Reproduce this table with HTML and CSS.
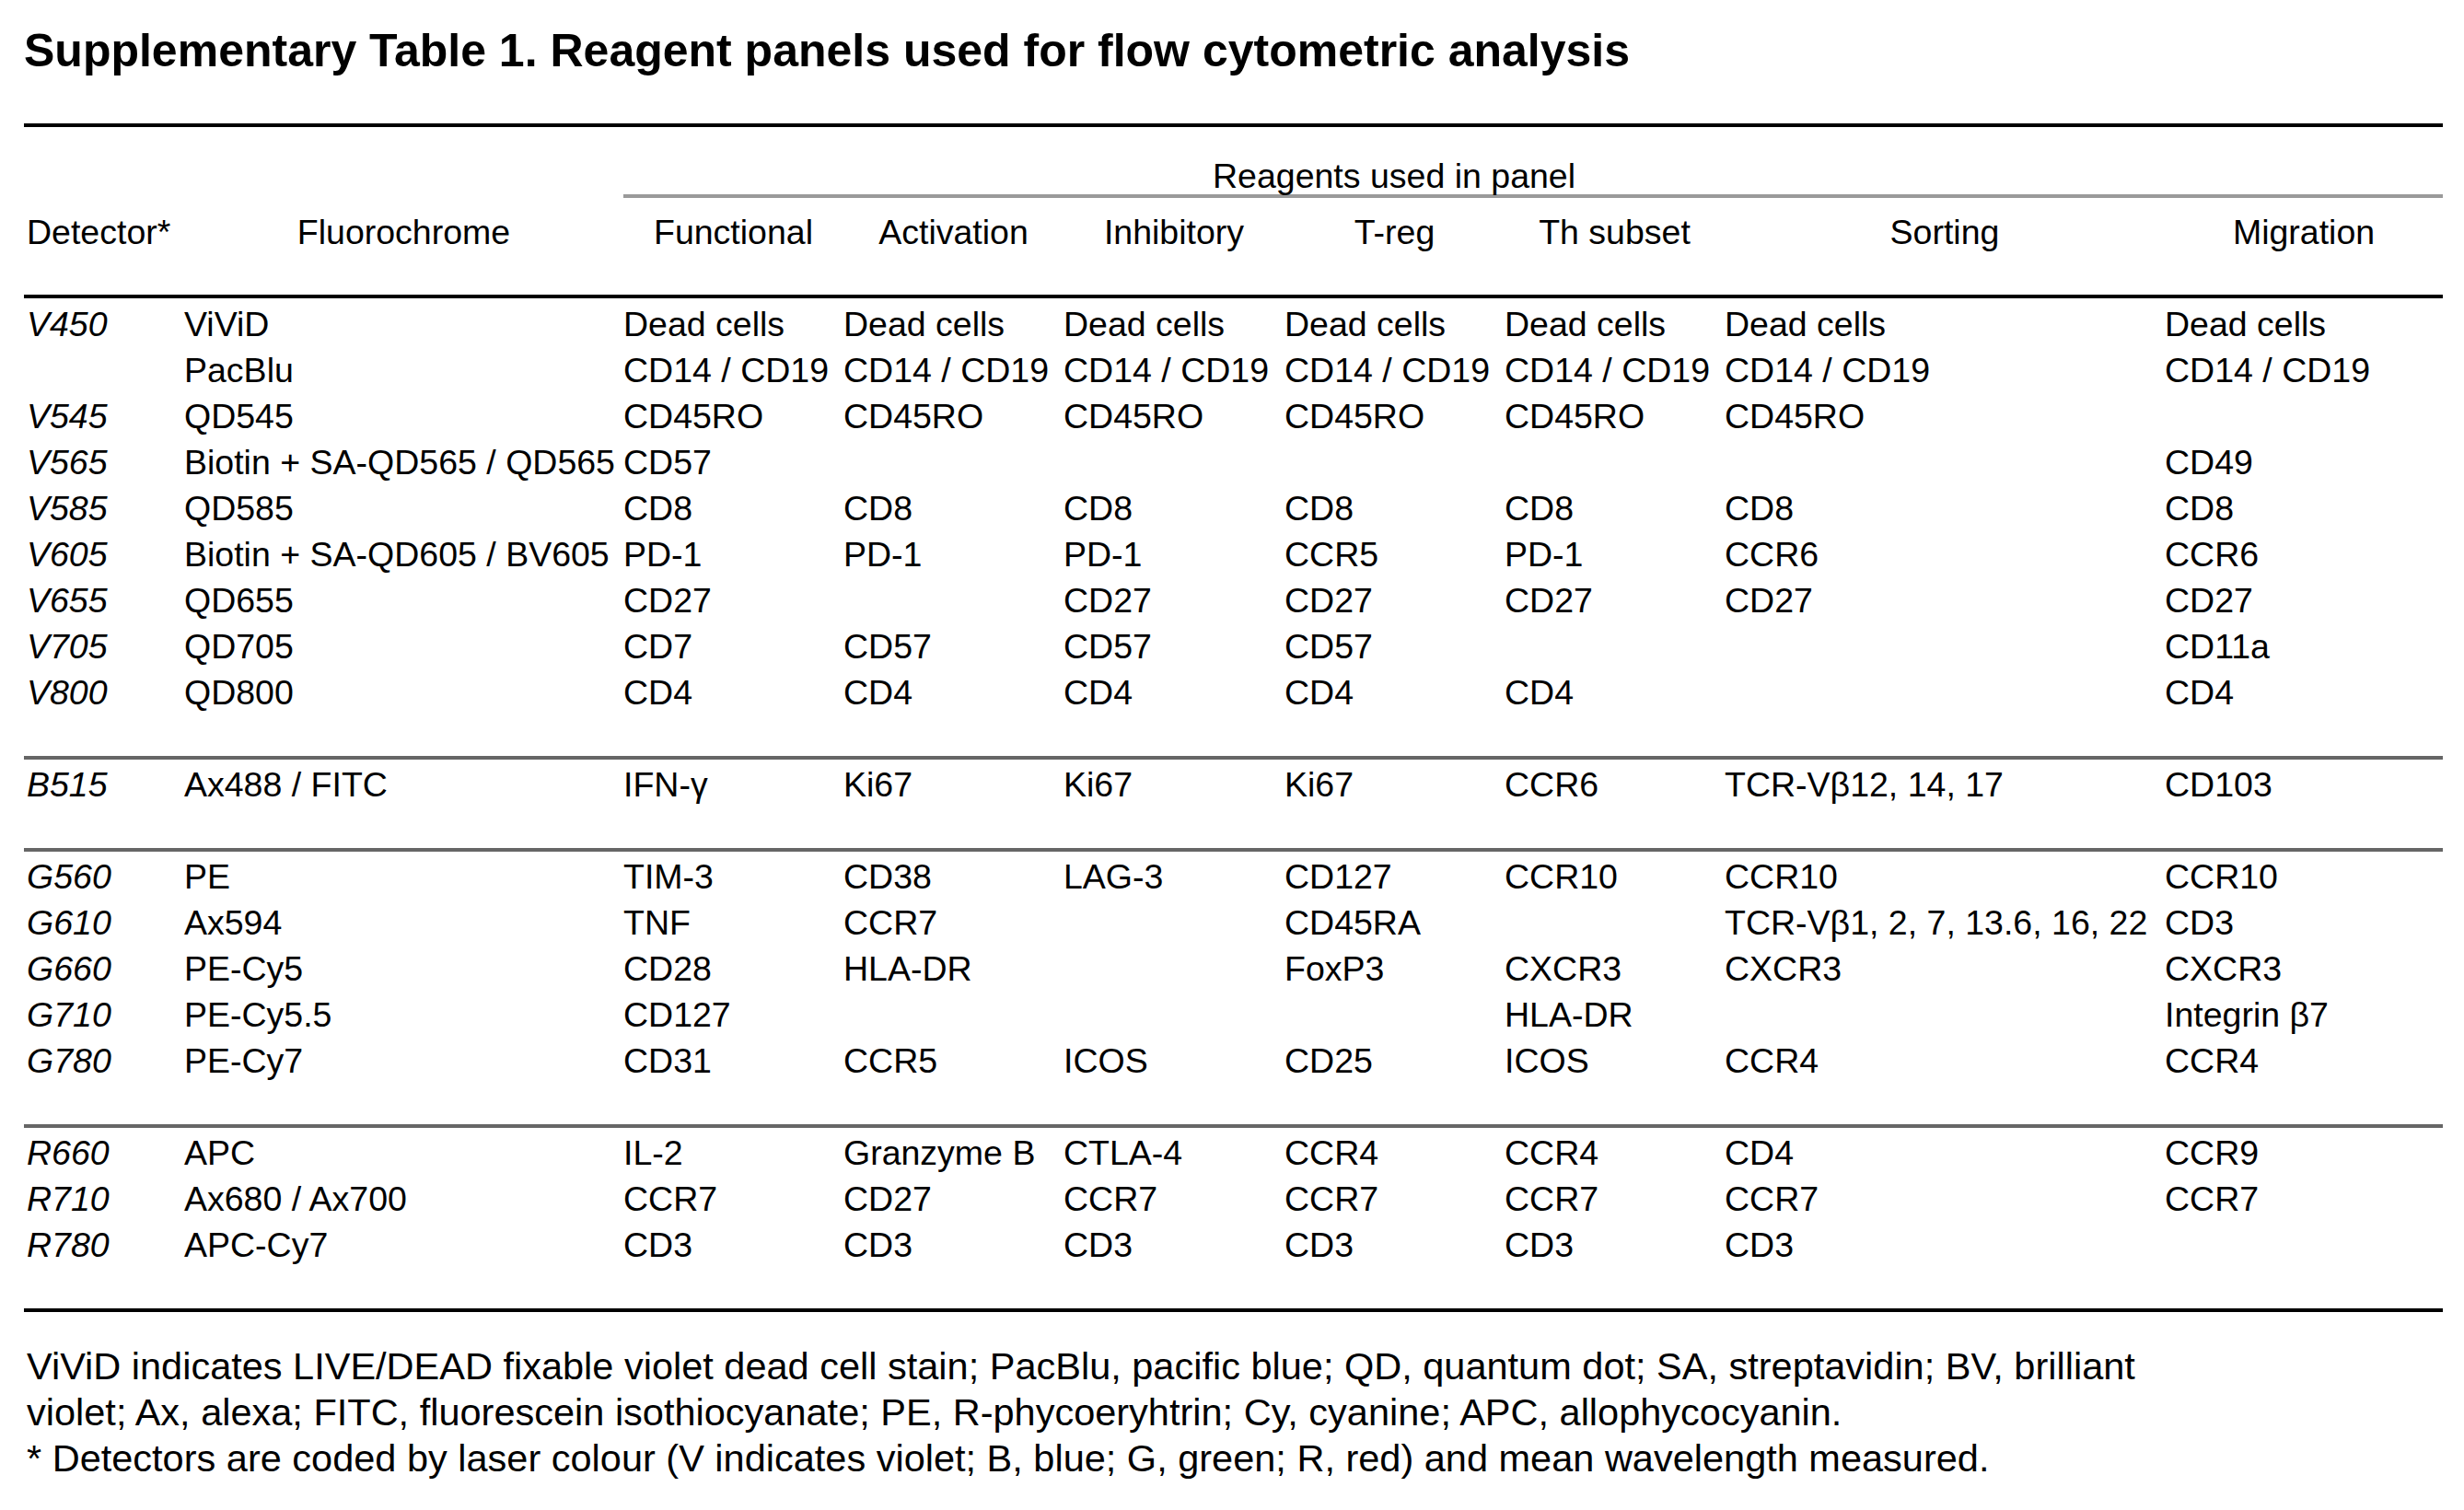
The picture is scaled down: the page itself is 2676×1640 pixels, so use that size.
FILE: index.html
```html
<!DOCTYPE html>
<html lang="en">
<head>
<meta charset="utf-8">
<title>Supplementary Table 1</title>
<link rel="stylesheet" href="styles.css">
</head>
<body>
<main class="page">
  <h1 class="title">Supplementary Table 1. Reagent panels used for flow cytometric analysis</h1>
  <table class="panel-table">
    <colgroup>
      <col class="c-det"><col class="c-fluo"><col class="c-std"><col class="c-std"><col class="c-inh"><col class="c-std"><col class="c-std"><col class="c-sort"><col class="c-mig">
    </colgroup>
    <thead>
      <tr class="head-top">
        <th rowspan="2" class="h-det">Detector*</th>
        <th rowspan="2" class="h-fluo">Fluorochrome</th>
        <th colspan="6" class="h-span">Reagents used in panel</th>
        <th class="h-span"></th>
      </tr>
      <tr class="head-cols">
        <th>Functional</th><th>Activation</th><th>Inhibitory</th><th>T-reg</th><th>Th subset</th><th>Sorting</th><th>Migration</th>
      </tr>
    </thead>
    <tbody class="group">
      <tr><td class="det">V450</td><td>ViViD</td><td>Dead cells</td><td>Dead cells</td><td>Dead cells</td><td>Dead cells</td><td>Dead cells</td><td>Dead cells</td><td>Dead cells</td></tr>
      <tr><td class="det"></td><td>PacBlu</td><td>CD14 / CD19</td><td>CD14 / CD19</td><td>CD14 / CD19</td><td>CD14 / CD19</td><td>CD14 / CD19</td><td>CD14 / CD19</td><td>CD14 / CD19</td></tr>
      <tr><td class="det">V545</td><td>QD545</td><td>CD45RO</td><td>CD45RO</td><td>CD45RO</td><td>CD45RO</td><td>CD45RO</td><td>CD45RO</td><td></td></tr>
      <tr><td class="det">V565</td><td>Biotin + SA-QD565 / QD565</td><td>CD57</td><td></td><td></td><td></td><td></td><td></td><td>CD49</td></tr>
      <tr><td class="det">V585</td><td>QD585</td><td>CD8</td><td>CD8</td><td>CD8</td><td>CD8</td><td>CD8</td><td>CD8</td><td>CD8</td></tr>
      <tr><td class="det">V605</td><td>Biotin + SA-QD605 / BV605</td><td>PD-1</td><td>PD-1</td><td>PD-1</td><td>CCR5</td><td>PD-1</td><td>CCR6</td><td>CCR6</td></tr>
      <tr><td class="det">V655</td><td>QD655</td><td>CD27</td><td></td><td>CD27</td><td>CD27</td><td>CD27</td><td>CD27</td><td>CD27</td></tr>
      <tr><td class="det">V705</td><td>QD705</td><td>CD7</td><td>CD57</td><td>CD57</td><td>CD57</td><td></td><td></td><td>CD11a</td></tr>
      <tr><td class="det">V800</td><td>QD800</td><td>CD4</td><td>CD4</td><td>CD4</td><td>CD4</td><td>CD4</td><td></td><td>CD4</td></tr>
    </tbody>
    <tbody class="group">
      <tr><td class="det">B515</td><td>Ax488 / FITC</td><td>IFN-γ</td><td>Ki67</td><td>Ki67</td><td>Ki67</td><td>CCR6</td><td>TCR-Vβ12, 14, 17</td><td>CD103</td></tr>
    </tbody>
    <tbody class="group">
      <tr><td class="det">G560</td><td>PE</td><td>TIM-3</td><td>CD38</td><td>LAG-3</td><td>CD127</td><td>CCR10</td><td>CCR10</td><td>CCR10</td></tr>
      <tr><td class="det">G610</td><td>Ax594</td><td>TNF</td><td>CCR7</td><td></td><td>CD45RA</td><td></td><td>TCR-Vβ1, 2, 7, 13.6, 16, 22</td><td>CD3</td></tr>
      <tr><td class="det">G660</td><td>PE-Cy5</td><td>CD28</td><td>HLA-DR</td><td></td><td>FoxP3</td><td>CXCR3</td><td>CXCR3</td><td>CXCR3</td></tr>
      <tr><td class="det">G710</td><td>PE-Cy5.5</td><td>CD127</td><td></td><td></td><td></td><td>HLA-DR</td><td></td><td>Integrin β7</td></tr>
      <tr><td class="det">G780</td><td>PE-Cy7</td><td>CD31</td><td>CCR5</td><td>ICOS</td><td>CD25</td><td>ICOS</td><td>CCR4</td><td>CCR4</td></tr>
    </tbody>
    <tbody class="group last">
      <tr><td class="det">R660</td><td>APC</td><td>IL-2</td><td>Granzyme B</td><td>CTLA-4</td><td>CCR4</td><td>CCR4</td><td>CD4</td><td>CCR9</td></tr>
      <tr><td class="det">R710</td><td>Ax680 / Ax700</td><td>CCR7</td><td>CD27</td><td>CCR7</td><td>CCR7</td><td>CCR7</td><td>CCR7</td><td>CCR7</td></tr>
      <tr><td class="det">R780</td><td>APC-Cy7</td><td>CD3</td><td>CD3</td><td>CD3</td><td>CD3</td><td>CD3</td><td>CD3</td><td></td></tr>
    </tbody>
  </table>
  <div class="notes">
    <p>ViViD indicates LIVE/DEAD fixable violet dead cell stain; PacBlu, pacific blue; QD, quantum dot; SA, streptavidin; BV, brilliant violet; Ax, alexa; FITC, fluorescein isothiocyanate; PE, R-phycoeryhtrin; Cy, cyanine; APC, allophycocyanin.</p>
    <p>* Detectors are coded by laser colour (V indicates violet; B, blue; G, green; R, red) and mean wavelength measured.</p>
  </div>
</main>
</body>
</html>
```

FILE: styles.css
```css
html, body {
  margin: 0;
  padding: 0;
  background: #fff;
  color: #000;
  font-family: "Liberation Sans", Arial, Helvetica, sans-serif;
}

.page {
  padding: 27px 0 0 26px;
}

.title {
  margin: 0 0 51px;
  font-size: 50px;
  line-height: 56px;
  font-weight: bold;
  white-space: nowrap;
}

.panel-table {
  border-collapse: separate;
  border-spacing: 0;
  table-layout: fixed;
  width: 2627px;
  font-size: 37.5px;
}

.c-det { width: 174px; }
.c-fluo { width: 477px; }
.c-std { width: 239px; }
.c-inh { width: 240px; }
.c-sort { width: 478px; }
.c-mig { width: 302px; }

.panel-table th,
.panel-table td {
  padding: 0;
  font-weight: normal;
  white-space: nowrap;
  text-align: left;
  vertical-align: top;
  line-height: 50px;
}

/* header */
.panel-table thead th {
  line-height: 40px;
  text-align: center;
}

.head-top th {
  border-top: 4px solid #000;
}

.h-span {
  padding-top: 33px !important;
  border-bottom: 4px solid #9a9a9a;
}

.head-cols th {
  padding-top: 17px !important;
  padding-bottom: 48px !important;
  border-bottom: 4px solid #000;
}

.h-det,
.h-fluo {
  vertical-align: bottom !important;
  padding-bottom: 48px !important;
  border-bottom: 4px solid #000;
}

.panel-table thead .h-det {
  text-align: left;
  padding-left: 3px;
}

/* body */
.det {
  font-style: italic;
  padding-left: 3px !important;
}

.group tr:first-child td {
  padding-top: 2px;
  border-top: 4px solid #666;
}

.group:first-of-type tr:first-child td {
  padding-top: 3px;
  border-top: 0;
}

.group tr:last-child td {
  padding-bottom: 44px;
}

.group.last tr:last-child td {
  border-bottom: 4px solid #000;
}

/* notes */
.notes {
  margin: 34px 0 0 3px;
  max-width: 2370px;
  font-size: 41.5px;
  line-height: 50px;
}

.notes p {
  margin: 0;
}
```
